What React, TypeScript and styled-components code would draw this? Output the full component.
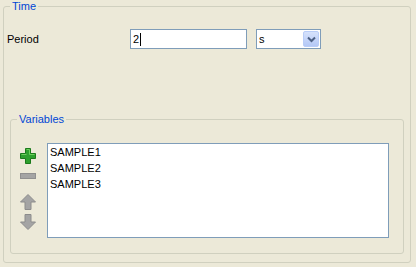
import React from "react";
import styled, { createGlobalStyle } from "styled-components";

const GlobalStyle = createGlobalStyle`
  html, body {
    margin: 0;
    padding: 0;
    background: #ece9d8;
  }
  body {
    font-family: "Liberation Sans", Arial, sans-serif;
    font-size: 11px;
    color: #000;
  }
`;

const Page = styled.div`
  padding: 0 5px 0 3px;
  width: 416px;
  height: 267px;
  box-sizing: border-box;
`;

const Group = styled.fieldset<{ $inset?: number }>`
  margin: 0 ${(p) => p.$inset ?? 0}px 0 ${(p) => p.$inset ?? 0}px;
  padding: 0;
  min-inline-size: 0;
  border: 1px solid #d0d0bf;
  border-radius: 3px;
`;

const Caption = styled.legend`
  margin-left: 6px;
  padding: 0 2px;
  font-size: 11px;
  line-height: 12px;
  color: #0046d5;
`;

const Row = styled.div`
  display: flex;
  align-items: center;
  margin-top: 17px;
  padding-left: 3px;
`;

const Label = styled.div`
  width: 123px;
`;

const TextBox = styled.div`
  width: 117px;
  height: 20px;
  box-sizing: border-box;
  border: 1px solid #7f9db9;
  background: #fff;
  display: flex;
  align-items: center;
  padding-left: 2px;
`;

const Caret = styled.span`
  display: inline-block;
  width: 1px;
  height: 13px;
  background: #000;
  margin-left: 1px;
`;

const Select = styled.div`
  margin-left: 9px;
  width: 65px;
  height: 20px;
  box-sizing: border-box;
  border: 1px solid #7f9db9;
  background: #fff;
  display: flex;
  align-items: center;
  padding: 0 1px 0 2px;
`;

const SelectValue = styled.span`
  flex: 1;
`;

const DropButton = styled.div`
  width: 16px;
  height: 16px;
  box-sizing: border-box;
  border: 1px solid #b9cdf8;
  border-radius: 2px;
  background: linear-gradient(#d6e2fc, #b4c8f6);
  display: flex;
  align-items: center;
  justify-content: center;
`;

const VarsGroup = styled(Group)`
  margin-top: 64px;
  margin-bottom: 8px;
  padding-bottom: 15px;
`;

const VarsBody = styled.div`
  display: flex;
  margin-top: 18px;
`;

const Tools = styled.div`
  width: 36px;
  padding-left: 8px;
  box-sizing: border-box;
  display: flex;
  flex-direction: column;
  padding-top: 5px;
`;

const ToolIcon = styled.div<{ $gap: number }>`
  width: 18px;
  height: 16px;
  margin-bottom: ${(p) => p.$gap}px;
  display: flex;
  align-items: center;
  justify-content: center;
`;

const List = styled.div`
  width: 342px;
  height: 95px;
  box-sizing: border-box;
  border: 1px solid #7f9db9;
  background: #fff;
  padding: 0 2px;
`;

const Item = styled.div`
  line-height: 16px;
  height: 16px;
`;

const Plus = () => (
  <svg width="16" height="16" viewBox="0 0 16 16">
    <path d="M5.5 0.5h5v5h5v5h-5v5h-5v-5h-5v-5h5z" fill="#2ea02e" stroke="#1b7a1b" />
    <path d="M6.5 1.5h3v5h5M1.5 6.5h5" fill="none" stroke="#6ccf5c" />
  </svg>
);

const Minus = () => (
  <svg width="16" height="16" viewBox="0 0 16 16">
    <rect x="0.5" y="5.5" width="15" height="5" fill="#a4a4a4" stroke="#909090" />
  </svg>
);

const Up = () => (
  <svg width="16" height="16" viewBox="0 0 16 16">
    <path d="M8 0.5L15.5 8H11v7.5H5V8H0.5z" fill="#a4a4a4" stroke="#8c8c8c" strokeLinejoin="round" />
  </svg>
);

const Down = () => (
  <svg width="16" height="16" viewBox="0 0 16 16">
    <path d="M8 15.5L15.5 8H11V0.5H5V8H0.5z" fill="#a4a4a4" stroke="#8c8c8c" strokeLinejoin="round" />
  </svg>
);

const Chevron = () => (
  <svg width="9" height="7" viewBox="0 0 9 7">
    <path d="M1 1.5l3.5 3.5 3.5-3.5" fill="none" stroke="#4d6185" strokeWidth="2" />
  </svg>
);

const variables = ["SAMPLE1", "SAMPLE2", "SAMPLE3"];

export default function App() {
  return (
    <Page>
      <GlobalStyle />
      <Group>
        <Caption>Time</Caption>
        <Row>
          <Label>Period</Label>
          <TextBox>
            2<Caret />
          </TextBox>
          <Select>
            <SelectValue>s</SelectValue>
            <DropButton>
              <Chevron />
            </DropButton>
          </Select>
        </Row>
        <VarsGroup $inset={6}>
          <Caption>Variables</Caption>
          <VarsBody>
            <Tools>
              <ToolIcon $gap={4}>
                <Plus />
              </ToolIcon>
              <ToolIcon $gap={10}>
                <Minus />
              </ToolIcon>
              <ToolIcon $gap={4}>
                <Up />
              </ToolIcon>
              <ToolIcon $gap={0}>
                <Down />
              </ToolIcon>
            </Tools>
            <List>
              {variables.map((v) => (
                <Item key={v}>{v}</Item>
              ))}
            </List>
          </VarsBody>
        </VarsGroup>
      </Group>
    </Page>
  );
}
